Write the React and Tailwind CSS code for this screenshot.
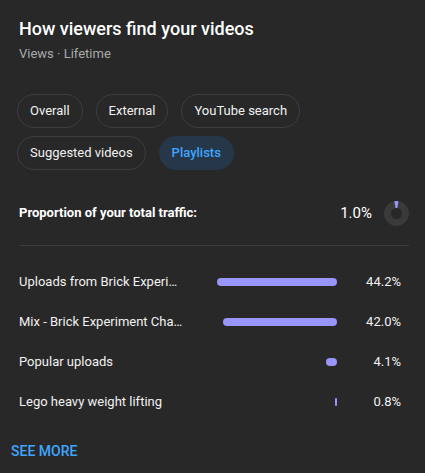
const rows = [
    { label: 'Uploads from Brick Experiment Channel', pct: 44.2 },
    { label: 'Mix - Brick Experiment Channel', pct: 42.0 },
    { label: 'Popular uploads', pct: 4.1 },
    { label: 'Lego heavy weight lifting', pct: 0.8 },
];

const Chip = ({ label, active }) => (
    <button
        className={
            active
                ? 'h-[34px] px-[12px] rounded-full border border-transparent bg-[#263749] text-[#3ea6ff] text-[13px] font-medium'
                : 'h-[34px] px-[12px] rounded-full border border-[#3e3e3e] text-[#f1f1f1] text-[13px] font-normal'
        }
    >
        {label}
    </button>
);

const Donut = () => (
    <svg width="25" height="25" viewBox="0 0 25 25">
        <circle cx="12.5" cy="12.5" r="9" fill="none" stroke="#3a3a3a" strokeWidth="7" />
        <circle
            cx="12.5"
            cy="12.5"
            r="9"
            fill="none"
            stroke="#9a95fa"
            strokeWidth="7"
            strokeDasharray="3 60"
            transform="rotate(-100 12.5 12.5)"
        />
    </svg>
);

const App = () => {
    const max = 44.2;

    return (
        <div className="w-[425px] h-[473px] bg-[#282828] font-['Roboto',sans-serif] text-[#f1f1f1] overflow-hidden">
            <div className="pl-[19px] pr-[16px] pt-[17px]">
                {/* Header */}
                <h2 className="text-[18px] leading-[24px] font-medium text-white">How viewers find your videos</h2>
                <p className="mt-[4px] text-[13px] leading-[18px] text-[#aaaaaa]">Views · Lifetime</p>

                {/* Filter chips */}
                <div className="mt-[31px] -ml-[2px] flex flex-wrap gap-x-[13px] gap-y-[8px] w-[300px]">
                    <Chip label="Overall" />
                    <Chip label="External" />
                    <Chip label="YouTube search" />
                    <Chip label="Suggested videos" />
                    <Chip label="Playlists" active />
                </div>

                {/* Proportion */}
                <div className="mt-[30px] flex items-center h-[26px]">
                    <span className="flex-1 text-[13px] font-bold text-white">Proportion of your total traffic:</span>
                    <span className="text-[15px] text-white">1.0%</span>
                    <div className="ml-[12px]">
                        <Donut />
                    </div>
                </div>

                <div className="mt-[19px] ml-[1px] h-px bg-[#3d3d3d]" />

                {/* Rows */}
                <div className="mt-[16px] pr-[8px]">
                    {rows.map((row) => (
                        <div key={row.label} className="h-[40px] flex items-center">
                            <span className="w-[164px] truncate text-[13px] text-[#f1f1f1]">{row.label}</span>
                            <div className="flex-1 flex justify-end">
                                <div
                                    className="h-[8px] rounded-full bg-[#9a95fa]"
                                    style={{ width: Math.max(2, Math.round((row.pct / max) * 120)) }}
                                />
                            </div>
                            <span className="w-[64px] text-right text-[13px] text-[#f1f1f1]">{row.pct.toFixed(1)}%</span>
                        </div>
                    ))}
                </div>
            </div>

            <button className="mt-[19px] ml-[11px] text-[14px] font-medium text-[#3ea6ff] uppercase">See more</button>
        </div>
    );
};

export default App;
